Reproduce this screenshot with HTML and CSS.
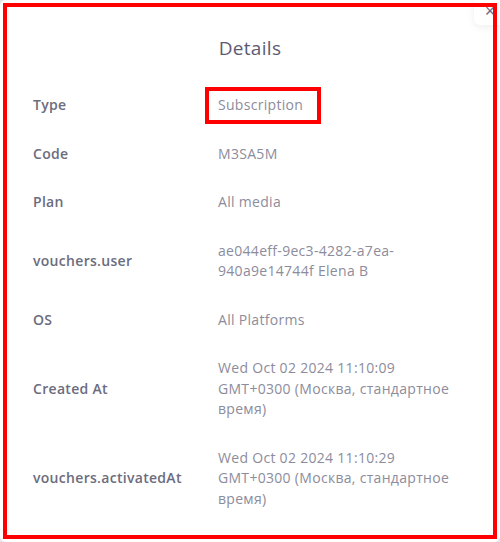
FILE: index.html
```html
<!DOCTYPE html>
<html lang="en">

<head>
    <meta charset="UTF-8">
    <meta name="viewport" content="width=device-width, initial-scale=1.0">
    <title>Details</title>
    <link rel="stylesheet" href="styles.css">
</head>

<body>
    <div class="modal">
        <button class="close" aria-label="Close">&times;</button>

        <div class="frame">
            <h2>Details</h2>

            <div class="details">
                <div class="label">Type</div>
                <div class="value"><span class="highlight">Subscription</span></div>

                <div class="label">Code</div>
                <div class="value">M3SA5M</div>

                <div class="label">Plan</div>
                <div class="value">All media</div>

                <div class="label">vouchers.user</div>
                <div class="value">ae044eff-9ec3-4282-a7ea-940a9e14744f Elena B</div>

                <div class="label">OS</div>
                <div class="value">All Platforms</div>

                <div class="label">Created At</div>
                <div class="value">Wed Oct 02 2024 11:10:09 GMT+0300 (Москва, стандартное время)</div>

                <div class="label">vouchers.activatedAt</div>
                <div class="value">Wed Oct 02 2024 11:10:29 GMT+0300 (Москва, стандартное время)</div>
            </div>
        </div>
    </div>
</body>

</html>
```

FILE: styles.css
```css
html,
body {
    height: 100%;
}

body {
    margin: 0;
    font-family: "Open Sans", "Noto Sans", sans-serif;
    background-color: #e6e6ea;
    overflow: hidden;
}

.modal {
    position: relative;
    height: 100%;
    box-sizing: border-box;
    padding: 3px;
    background: #fff;
    border-radius: 6px;
}

/* close button sits under the red frame, mostly cut off */
.close {
    position: absolute;
    top: -3px;
    right: -16px;
    width: 42px;
    height: 28px;
    padding: 0 10px 0 0;
    border: none;
    border-radius: 6px;
    background: #fff;
    box-shadow: 0 2px 8px rgba(0, 0, 0, 0.07);
    color: #6a6a85;
    font-size: 18px;
    line-height: 20px;
    cursor: pointer;
}

.frame {
    position: relative;
    z-index: 1;
    height: 100%;
    box-sizing: border-box;
    border: 4px solid #ff0000;
    padding: 29px 26px 0 26px;
}

h2 {
    margin: 0;
    text-align: center;
    font-size: 19px;
    font-weight: 400;
    line-height: 24px;
    letter-spacing: 0.3px;
    color: #5c5b74;
}

.details {
    display: grid;
    grid-template-columns: 185px 235px;
    align-items: center;
    margin-top: 21px;
}

.label,
.value {
    padding: 14px 0;
    font-size: 14px;
    line-height: 20.5px;
    letter-spacing: 0.3px;
}

.label {
    font-weight: 600;
    color: #6c6c7e;
}

.value {
    color: #8c8c9c;
}

.highlight {
    display: inline-block;
    padding: 4px 14px 4px 9px;
    margin: -8px -18px -8px -13px;
    border: 4px solid #ff0000;
}
```
